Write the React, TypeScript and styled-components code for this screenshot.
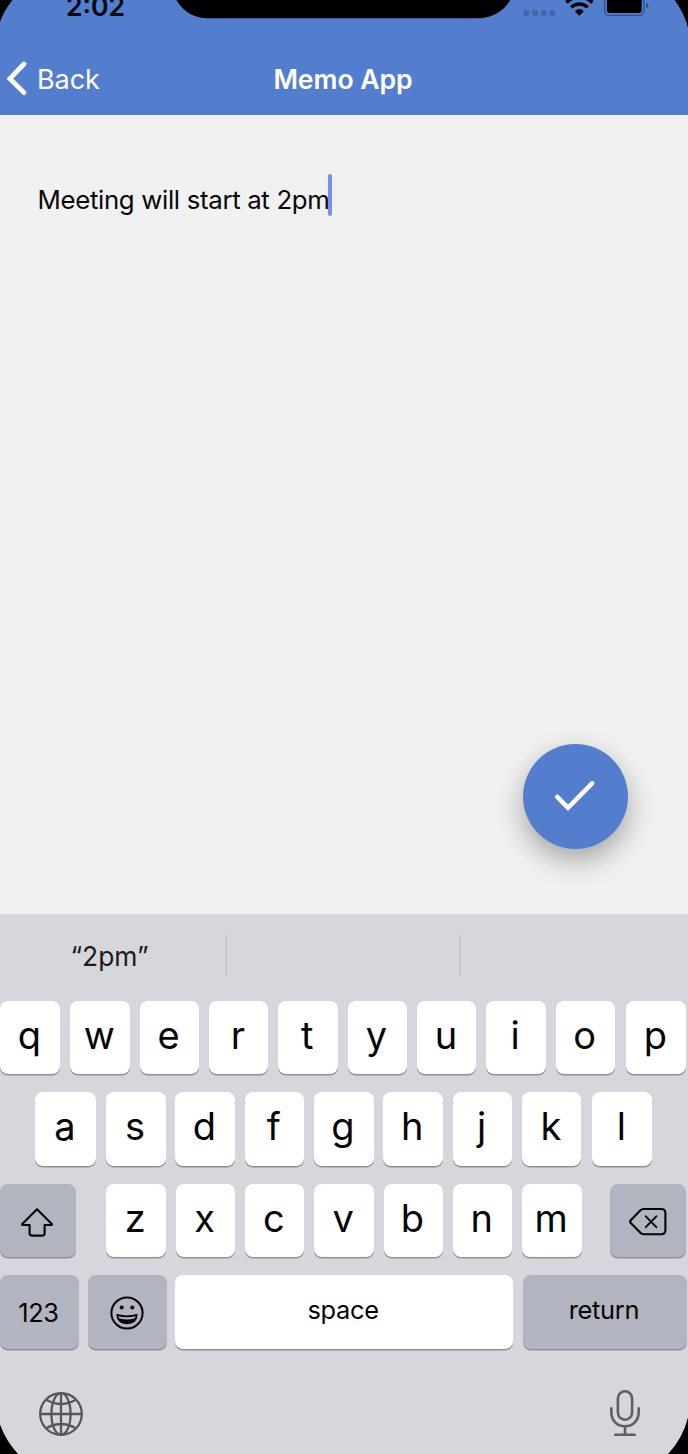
import React from "react";
import styled, { createGlobalStyle } from "styled-components";

const GlobalStyle = createGlobalStyle`
  *, *::before, *::after { box-sizing: border-box; }
  body { margin: 0; background: #000; font-family: Inter, "Liberation Sans", sans-serif; }
  svg { display: block; flex: none; }
`;

const Screen = styled.div`
  position: relative;
  display: flex;
  flex-direction: column;
  width: 688px;
  height: 1454px;
  overflow: hidden;
  background: #f1f1f1;
`;

const Header = styled.header`
  height: 114.5px;
  flex: none;
  background: #537ece;
`;

const StatusBar = styled.div`
  display: flex;
  align-items: flex-start;
  height: 44px;
  padding-left: 66px;
`;

const Clock = styled.span`
  width: 457px;
  height: 20px;
  margin-top: -4px;
  line-height: 20px;
  font-size: 26.6px;
  font-weight: 600;
  letter-spacing: 0;
  color: #05070c;
`;

const NavBar = styled.nav`
  display: grid;
  grid-template-columns: 1fr auto 1fr;
  align-items: center;
  height: 70px;
  color: #fff;
`;

const BackButton = styled.button`
  display: flex;
  align-items: center;
  gap: 10px;
  padding: 0 0 0 6px;
  border: 0;
  background: none;
  color: inherit;
  font: 400 27px/34px Inter, sans-serif;
  letter-spacing: -0.1px;
`;

const BackLabel = styled.span`
  padding-top: 2px;
`;

const Title = styled.h1`
  margin: 0 2px 0 0;
  font-size: 26.6px;
  line-height: 34px;
  font-weight: 600;
  letter-spacing: -0.05px;
`;

const Editor = styled.main`
  flex: 1;
  display: flex;
  flex-direction: column;
  align-items: flex-start;
  justify-content: space-between;
  padding: 59px 60px 65px 37.5px;
`;

const MemoLine = styled.div`
  display: flex;
  align-items: center;
  height: 42px;
  color: #08080a;
  font-size: 25.8px;
  letter-spacing: -0.33px;
  white-space: pre;
`;

const MemoText = styled.span`
  padding-top: 9px;
`;

const Caret = styled.span`
  width: 3.4px;
  height: 42px;
  margin-left: -1.2px;
  border-radius: 2px;
  background: #778ff0;
`;

const SaveButton = styled.button`
  display: flex;
  align-items: center;
  justify-content: center;
  align-self: flex-end;
  width: 105px;
  height: 105px;
  padding: 0 1.6px 0 0;
  border: 0;
  border-radius: 50%;
  background: #537ece;
  box-shadow: 0 11px 28px rgba(0, 0, 0, 0.32);
`;

const Keyboard = styled.section`
  display: flex;
  flex-direction: column;
  height: 540px;
  flex: none;
  background: #d6d7dc;
`;

const Suggestions = styled.div`
  display: grid;
  grid-template-columns: 225px 234px 1fr;
  height: 41px;
  margin: 21px 0 25px;
`;

const Suggestion = styled.div<{ $divided?: boolean }>`
  display: flex;
  align-items: center;
  justify-content: center;
  padding: 1px 6px 0 0;
  border-left: ${(p) => (p.$divided ? "2px solid #c5c6cb" : "0")};
  color: #1c1c1f;
  font-size: 26.4px;
  letter-spacing: 0;
`;

const KeyRow = styled.div<{ $columns: string; $indent?: number }>`
  display: grid;
  grid-template-columns: ${(p) => p.$columns};
  column-gap: 9.95px;
  height: 73.4px;
  margin: 0 0 18.1px ${(p) => p.$indent ?? 0}px;
`;

const Key = styled.button<{ $tone?: "light" | "dark"; $word?: boolean; $lift?: number; $shift?: number }>`
  display: flex;
  align-items: center;
  justify-content: center;
  min-width: 0;
  padding: ${(p) => Math.max(0, -(p.$lift ?? 0))}px 1.6px ${(p) => Math.max(0, p.$lift ?? 6)}px 0;
  margin-left: ${(p) => p.$shift ?? 0}px;
  border: 0;
  border-radius: 8px;
  background: ${(p) => (p.$tone === "dark" ? "#b2b4c0" : "#fff")};
  box-shadow: 0 1.6px 0 #8f9095;
  color: #050505;
  font-family: Inter, sans-serif;
  font-size: ${(p) => (p.$word ? 25.4 : 38)}px;
  font-weight: 400;
  letter-spacing: ${(p) => (p.$word ? -0.3 : 0)}px;
  line-height: 1;
`;

const Dock = styled.footer`
  display: flex;
  align-items: flex-start;
  justify-content: space-between;
  padding: 22px 46px 0 37.5px;

  svg:first-child {
    margin-top: 2.4px;
  }
`;

const Overlay = styled.svg`
  position: absolute;
  inset: 0;
  pointer-events: none;
`;

const SignalDots = () => (
  <svg width="33" height="18" viewBox="523 0 33 18" fill="#4567a9">
    {[523.4, 532.2, 540.9, 549.5].map((x) => (
      <rect key={x} x={x} y="10" width="5.8" height="6" rx="1.8" />
    ))}
  </svg>
);

const Wifi = () => (
  <svg width="48" height="18" viewBox="556 0 48 18" fill="none" stroke="#05070c">
    <path d="M566.4 2.5 A18 18 0 0 1 592.3 2.5" strokeWidth="3.6" />
    <path d="M571.2 7.4 A11.5 11.5 0 0 1 587.6 7.4" strokeWidth="3.4" />
    <path d="M574.9 11.2 Q579.3 7 583.8 11.2 L579.9 15.2 Q579.3 15.8 578.7 15.2 Z" fill="#05070c" stroke="none" />
  </svg>
);

const Battery = () => (
  <svg width="46" height="18" viewBox="604 0 46 18">
    <rect x="604.6" y="-6" width="39.2" height="21.4" rx="4.5" fill="none" stroke="#34518a" strokeWidth="1.4" />
    <rect x="606.9" y="-4" width="34.8" height="17" rx="2.4" fill="#000" />
    <path d="M646 2.4 Q648.4 3.2 648.4 5.4 T646 8.5 Z" fill="#34518a" />
  </svg>
);

const Chevron = () => (
  <svg width="21" height="36" viewBox="0 0 21 36" fill="none" stroke="#fff" strokeWidth="4.8" strokeLinecap="round" strokeLinejoin="miter">
    <path d="M18 3 L3.9 17.6 L18 31.6" />
  </svg>
);

const Check = () => (
  <svg width="42" height="32" viewBox="0 0 42 32" fill="none" stroke="#fff" strokeWidth="4.6" strokeLinecap="round">
    <path d="M3.3 15.9 L14 26.8 L38.1 2.4" />
  </svg>
);

const ShiftIcon = () => (
  <svg width="34" height="32" viewBox="0 0 34 32" fill="none" stroke="#050505" strokeWidth="2.1" strokeLinejoin="round">
    <path d="M17 3.2 L32 18.2 Q32.2 19 31.5 19 H24.6 V27.6 Q24.6 29.6 22.6 29.6 H11.6 Q9.6 29.6 9.6 27.6 V19 H2.5 Q1.8 19 2 18.2 Z" />
  </svg>
);

const BackspaceIcon = () => (
  <svg width="40" height="30" viewBox="0 0 40 30" fill="none" stroke="#050505" strokeWidth="2.1" strokeLinejoin="round" strokeLinecap="round">
    <path d="M16.4 2 H34.2 Q38.4 2 38.4 6.2 V23 Q38.4 27.2 34.2 27.2 H16.4 Q14.8 27.2 13.6 26.1 L3.8 16.1 Q2.5 14.7 3.8 13.3 L13.4 3.3 Q14.8 2 16.4 2 Z" />
    <path d="M18.8 9.3 L29.3 20.2 M29.3 9.3 L18.8 20.2" strokeWidth="1.9" />
  </svg>
);

const EmojiIcon = () => (
  <svg width="34" height="34" viewBox="0 0 34 34">
    <circle cx="17" cy="17" r="15.6" fill="none" stroke="#050505" strokeWidth="2" />
    <circle cx="11.7" cy="11.6" r="2" fill="#050505" />
    <circle cx="22.3" cy="11.6" r="2" fill="#050505" />
    <path d="M7 18.8 Q17 21.4 27 18.8 Q26.3 27.6 17 27.6 T7 18.8 Z" fill="#050505" stroke="#050505" strokeWidth="1.4" strokeLinejoin="round" />
    <path d="M8.4 20.2 Q17 22.4 25.6 20.2 Q25.2 22 24.4 22.4 Q17 24.4 9.6 22.4 Q8.8 22 8.4 20.2 Z" fill="#b2b4c0" />
  </svg>
);

const GlobeIcon = () => (
  <svg width="46" height="46" viewBox="0 0 46 46" fill="none" stroke="#55575c" strokeWidth="2.3">
    <circle cx="23" cy="23" r="20.8" />
    <ellipse cx="23" cy="23" rx="9.6" ry="20.8" />
    <path d="M23 2 V44 M2 23 H44 M8.6 9 Q23 17 37.4 9 M8.6 37 Q23 29 37.4 37" />
  </svg>
);

const MicIcon = () => (
  <svg width="34" height="50" viewBox="0 0 34 50" fill="none" stroke="#5d5f64" strokeWidth="2.6" strokeLinecap="round">
    <rect x="9.9" y="2.3" width="14.2" height="28.4" rx="7.1" />
    <path d="M3.3 19.2 V23 C3.3 31.5 9 37.3 17 37.3 S30.7 31.5 30.7 23 V19.2 M17 37.3 V45.7 M7.3 45.7 H26.7" />
  </svg>
);

const DeviceFrame = () => (
  <Overlay width="688" height="1454" viewBox="0 0 688 1454" fill="#000">
    <path d="M0 0 H12.5 Q4.4 10 0 22 Z" />
    <path d="M688 0 H674.5 Q684 12.5 688 27.5 Z" />
    <path d="M0 1424.5 Q6 1441 18 1454 H0 Z" />
    <path d="M688 1417.5 Q682.5 1439 668 1454 H688 Z" />
    <path d="M176.3 0 C183 11.5 194 18.2 208 18.2 H478 C492 18.2 503.5 11.5 510.3 0 Z" />
  </Overlay>
);

/* Keys that sit slightly off the regular pitch of their row. */
const keyShift: Record<string, number> = { p: 0.9, l: 0.4, z: 20.35 };

const letters = (row: string) =>
  row.split("").map((c) => (
    <Key key={c} $shift={keyShift[c]}>
      {c}
    </Key>
  ));

export default function App() {
  return (
    <>
      <GlobalStyle />
      <Screen>
        <Header>
          <StatusBar>
            <Clock>2:02</Clock>
            <SignalDots />
            <Wifi />
            <Battery />
          </StatusBar>
          <NavBar>
            <BackButton>
              <Chevron />
              <BackLabel>Back</BackLabel>
            </BackButton>
            <Title>Memo App</Title>
          </NavBar>
        </Header>
        <Editor>
          <MemoLine>
            <MemoText>Meeting will start at 2pm</MemoText>
            <Caret />
          </MemoLine>
          <SaveButton aria-label="Save">
            <Check />
          </SaveButton>
        </Editor>
        <Keyboard>
          <Suggestions>
            <Suggestion>“2pm”</Suggestion>
            <Suggestion $divided />
            <Suggestion $divided />
          </Suggestions>
          <KeyRow $columns="60.4px repeat(8, 59.4px) 61.4px">{letters("qwertyuiop")}</KeyRow>
          <KeyRow $indent={35.2} $columns="61px repeat(7, 59.4px) 61px">{letters("asdfghjkl")}</KeyRow>
          <KeyRow $columns="76px 79.75px repeat(6, 59.4px) 94.8px">
            <Key $tone="dark" $lift={-2} aria-label="Shift">
              <ShiftIcon />
            </Key>
            {letters("zxcvbnm")}
            <Key $tone="dark" $lift={-2} $shift={18.5} aria-label="Delete">
              <BackspaceIcon />
            </Key>
          </KeyRow>
          <KeyRow $columns="78.5px 78.6px 336px 163.6px">
            <Key $tone="dark" $word $lift={-1}>123</Key>
            <Key $tone="dark" $lift={-1} aria-label="Emoji">
              <EmojiIcon />
            </Key>
            <Key $word $lift={5} $shift={-2.2}>space</Key>
            <Key $tone="dark" $word $lift={5}>return</Key>
          </KeyRow>
          <Dock>
            <GlobeIcon />
            <MicIcon />
          </Dock>
        </Keyboard>
        <DeviceFrame />
      </Screen>
    </>
  );
}
